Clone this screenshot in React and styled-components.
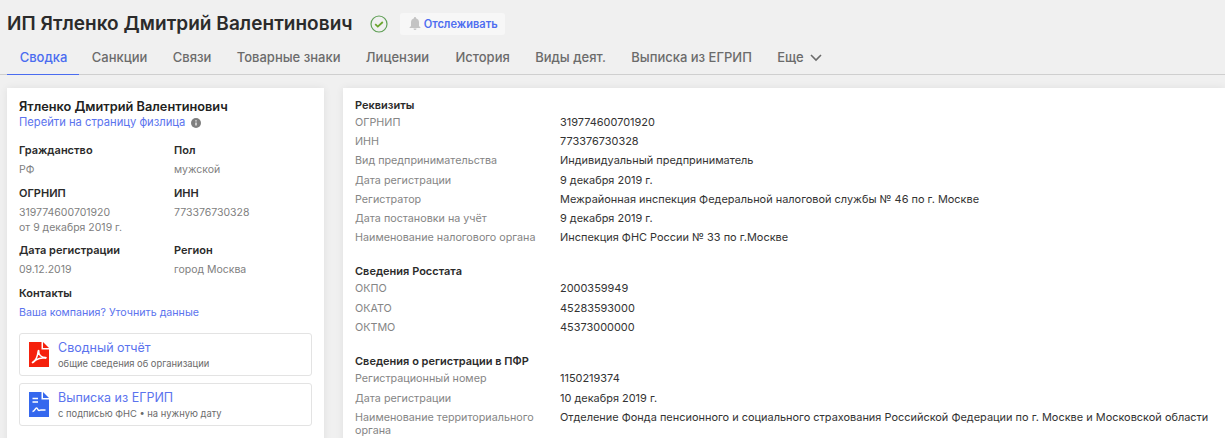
import React from "react";
import styled, { createGlobalStyle } from "styled-components";

const Global = createGlobalStyle`
  html, body { margin: 0; padding: 0; background: #f0f0f0; overflow: hidden; }
  body { font-family: Inter, "Noto Sans", sans-serif; }
`;
const Page = styled.div`width: 1225px; height: 438px; overflow: hidden; background: #f0f0f0;`;
const Header = styled.div`display: flex; align-items: center; height: 47px; padding-left: 7px;`;
const Title = styled.h1`margin: 0; font-size: 19px; font-weight: 600; color: #2b2b2b; letter-spacing: 0.04px; line-height: 24px;`;
const Check = styled.svg`width: 18px; height: 18px; margin-left: 17px; flex: none;`;
const Track = styled.button`
  display: flex; align-items: center; gap: 3px; margin-left: 12px; height: 22px; width: 105px; padding: 0 0 0 9px;
  border: 0; border-radius: 3px; background: #f7f7f7; color: #4f6ef0; font: 600 11.100px Inter, sans-serif;
`;
const Tabs = styled.nav`display: flex; height: 27px; border-bottom: 1px solid #cfcfcf; padding-left: 7px;`;
const Tab = styled.div`
  display: flex; align-items: flex-start; gap: 6px; padding: 2px ${p => (p.$active ? 11.7 : 12.7)}px 0 12.700px; height: 28px; box-sizing: border-box;
  margin-right: ${p => p.$after || 0}px;
  font-size: 13px; font-weight: 500; color: ${p => (p.$active ? "#4a6cf0" : "#6b6b6b")};
  border-bottom: ${p => (p.$active ? "1px solid #4a6cf0" : "none")};
`;
const Body = styled.div`display: flex; gap: 19px; padding: 13px 0 0 7px; align-items: flex-start;`;
const Card = styled.section`background: #fff; box-shadow: 0 0 8px rgba(0,0,0,.07); height: 400px; box-sizing: border-box;`;
const Left = styled(Card)`width: 317px; padding: 11px 12px 0 12px;`;
const Right = styled(Card)`flex: 1; padding: 10px 0 0 12px;`;
const PersonName = styled.div`font-size: 12.750px; font-weight: 600; color: #222; line-height: 16px;`;
const PersonLink = styled.div`display: flex; align-items: center; gap: 6px; font-size: 11.200px; color: #5b73ee; line-height: 15px; margin-bottom: 12px;`;
const InfoGrid = styled.div`display: grid; grid-template-columns: 155px 1fr;`;
const Field = styled.div`min-height: 43px; margin-bottom: ${p => p.$mb || 0}px;`;
const Label = styled.div`font-size: 11px; font-weight: 600; color: #2b2b2b; line-height: 16px; margin-bottom: 4px;`;
const Value = styled.div`font-size: 10.500px; color: #808080; line-height: 15px;`;
const ContactLink = styled.div`font-size: 10.650px; color: #5b73ee; line-height: 16px; margin-top: 1px; margin-bottom: 12px;`;
const DocCard = styled.div`
  display: flex; align-items: center; gap: 9px; height: 43px; box-sizing: border-box; padding: 0 0 0 9px;
  border: 1px solid #e3e3e3; border-radius: 3px; margin-bottom: 7px;
`;
const DocTitle = styled.div`font-size: 12.500px; color: #5b73ee; line-height: 18px;`;
const DocSub = styled.div`font-size: 9.400px; color: #6b6b6b; line-height: 14px;`;
const SectionTitle = styled.div`font-size: 11px; font-weight: 600; color: #2b2b2b; line-height: 14px; margin-top: ${p => p.$mt || 0}px; margin-bottom: 4px;`;
const Row = styled.div`display: grid; grid-template-columns: 205px 1fr; line-height: 13px; min-height: 19.200px;`;
const RowLabel = styled.div`color: #858585; font-size: 10.750px;`;
const RowValue = styled.div`color: #333; font-size: 10.950px;`;

const PdfIcon = () => (
  <svg width="20" height="25" viewBox="0 0 20 25">
    <path d="M0 0H12.500V7.500H20V25H0Z" fill="#f5210c" />
    <path d="M14 0L20 6H14Z" fill="#f5210c" />
    <path d="M3.500 20.500c2.500-1.500 5-6 5.500-10.500.2-2 1-2 .8 0-.3 2.500 2.500 5.500 6.700 5.500 1 0 .6 .8-.8 .6-3-.4-6.500 .5-9 2-1.500 1.200-3 3-3.200 2.400z" fill="none" stroke="#fff" strokeWidth="1.500" />
  </svg>
);
const DocIcon = () => (
  <svg width="20" height="25" viewBox="0 0 20 25">
    <path d="M0 0H12.500V7.500H20V25H0Z" fill="#3568ee" />
    <path d="M14 0L20 6H14Z" fill="#3568ee" />
    <path d="M3.500 6.500h5.500M3.500 10h5.500" stroke="#fff" strokeWidth="1.500" />
    <path d="M3.500 19.500c2.500 0 2.500-3.500 4-3.500s1 2.500 2.500 2.500 1-.5 2-.5h4.500" stroke="#fff" strokeWidth="1.500" fill="none" />
  </svg>
);

const req = [
  ["ОГРНИП", "319774600701920"],
  ["ИНН", "773376730328"],
  ["Вид предпринимательства", "Индивидуальный предприниматель"],
  ["Дата регистрации", "9 декабря 2019 г."],
  ["Регистратор", "Межрайонная инспекция Федеральной налоговой службы № 46 по г. Москве"],
  ["Дата постановки на учёт", "9 декабря 2019 г."],
  ["Наименование налогового органа", "Инспекция ФНС России № 33 по г.Москве"],
];
const stat = [["ОКПО", "2000359949"], ["ОКАТО", "45283593000"], ["ОКТМО", "45373000000"]];
const pfr = [
  ["Регистрационный номер", "1150219374"],
  ["Дата регистрации", "10 декабря 2019 г."],
  ["Наименование территориального органа", "Отделение Фонда пенсионного и социального страхования Российской Федерации по г. Москве и Московской области"],
];
const Rows = ({ items }) => items.map(([l, v]) => (
  <Row key={l}><RowLabel>{l}</RowLabel><RowValue>{v}</RowValue></Row>
));

export default function App() {
  return (
    <Page>
      <Global />
      <Header>
        <Title>ИП Ятленко Дмитрий Валентинович</Title>
        <Check viewBox="0 0 18 18">
          <circle cx="9" cy="9" r="8" fill="none" stroke="#5f9f55" strokeWidth="1.200" />
          <path d="M5.200 9.200l2.600 2.400 5-4.600" fill="none" stroke="#6aa52c" strokeWidth="1.800" />
        </Check>
        <Track>
          <svg width="12" height="13" viewBox="0 0 12 13"><path d="M6 0a1 1 0 0 1 1 1.200C9 1.800 10 3.500 10 5.500V9l1.500 1.500v.5H.5v-.5L2 9V5.500C2 3.500 3 1.800 5 1.200A1 1 0 0 1 6 0zM4.500 11.500h3a1.500 1.500 0 0 1-3 0z" fill="#c4c4c4" /></svg>
          Отслеживать
        </Track>
      </Header>
      <Tabs>
        <Tab $active>Сводка</Tab>
        <Tab>Санкции</Tab>
        <Tab>Связи</Tab>
        <Tab>Товарные знаки</Tab>
        <Tab $after={1}>Лицензии</Tab>
        <Tab>История</Tab>
        <Tab>Виды деят.</Tab>
        <Tab>Выписка из ЕГРИП</Tab>
        <Tab>Еще
          <svg width="12" height="8" viewBox="0 0 12 8" style={{ marginTop: 5 }}><path d="M1 1l5 5 5-5" fill="none" stroke="#6b6b6b" strokeWidth="1.600" /></svg>
        </Tab>
      </Tabs>
      <Body>
        <Left>
          <PersonName>Ятленко Дмитрий Валентинович</PersonName>
          <PersonLink>Перейти на страницу физлица
            <svg width="10" height="10" viewBox="0 0 10 10"><circle cx="5" cy="5" r="5" fill="#7f7f7f" /><path d="M5 4.500v3M5 2.200v1.200" stroke="#fff" strokeWidth="1.200" /></svg>
          </PersonLink>
          <InfoGrid>
            <Field><Label>Гражданство</Label><Value>РФ</Value></Field>
            <Field><Label>Пол</Label><Value>мужской</Value></Field>
            <Field $mb={7}><Label>ОГРНИП</Label><Value>319774600701920<br />от 9 декабря 2019 г.</Value></Field>
            <Field $mb={7}><Label>ИНН</Label><Value>773376730328</Value></Field>
            <Field><Label>Дата регистрации</Label><Value>09.12.2019</Value></Field>
            <Field><Label>Регион</Label><Value>город Москва</Value></Field>
          </InfoGrid>
          <Label>Контакты</Label>
          <ContactLink>Ваша компания? Уточнить данные</ContactLink>
          <DocCard><PdfIcon /><div><DocTitle>Сводный отчёт</DocTitle><DocSub>общие сведения об организации</DocSub></div></DocCard>
          <DocCard><DocIcon /><div><DocTitle>Выписка из ЕГРИП</DocTitle><DocSub>с подписью ФНС • на нужную дату</DocSub></div></DocCard>
        </Left>
        <Right>
          <SectionTitle>Реквизиты</SectionTitle>
          <Rows items={req} />
          <SectionTitle $mt={14}>Сведения Росстата</SectionTitle>
          <Rows items={stat} />
          <SectionTitle $mt={14.5}>Сведения о регистрации в ПФР</SectionTitle>
          <Rows items={pfr} />
        </Right>
      </Body>
    </Page>
  );
}
